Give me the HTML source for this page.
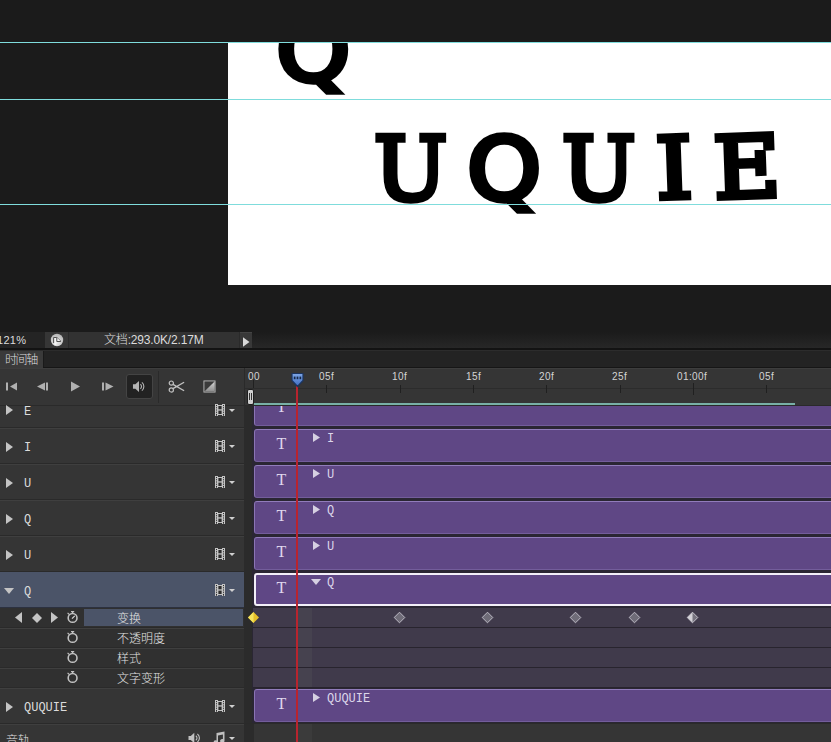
<!DOCTYPE html>
<html lang="zh-CN">
<head>
<meta charset="utf-8">
<title>时间轴</title>
<style>
html,body{margin:0;padding:0;}
body{width:831px;height:742px;overflow:hidden;background:#1b1b1b;position:relative;
 font-family:"Liberation Sans","Noto Sans CJK SC",sans-serif;font-size:11px;color:#d6d6d6;}
.abs,.abs *{position:absolute;}
#stage{position:absolute;left:0;top:0;width:831px;height:742px;overflow:hidden;}
#stage div,#stage span,#stage svg{position:absolute;}
/* canvas */
#canvas{left:228px;top:42px;width:603px;height:243px;background:#fff;overflow:hidden;}
.big{color:#000;font-size:96px;line-height:96px;font-weight:normal;-webkit-text-stroke:6px #000;
 transform-origin:0 0;white-space:nowrap;}
.big.sl{font-family:"DejaVu Serif","Liberation Serif",serif;}
.big.qs{font-family:"DejaVu Sans","Liberation Sans",sans-serif;}
.guide{left:0;width:831px;height:1px;background:#7fdcdc;}
/* status bar */
.sb{top:332px;height:16px;}
.txt{white-space:nowrap;}
/* rows */
.row{left:0;width:244px;background:#353535;}
.sep-d{left:0;width:244px;height:1px;background:#2a2a2a;}
.sep-l{left:0;width:244px;height:1px;background:#3f3f3f;}
.lname{left:24px;font-family:"Liberation Mono","DejaVu Sans Mono",monospace;font-size:12px;line-height:12px;color:#dcdcdc;white-space:nowrap;}
.cn{font-family:"Liberation Sans","Noto Sans CJK SC",sans-serif;font-size:12px;line-height:14px;color:#e2e2e2;white-space:nowrap;font-weight:300;}
.clip{left:254px;width:590px;height:33px;background:#5f4785;border:1px solid #8a74b4;border-top-color:#917cbb;border-bottom-color:#735d9b;border-radius:3px;box-sizing:border-box;}
.clip.sel{border:2px solid #f2eef8;}
.tico{font-family:"Liberation Serif","DejaVu Serif",serif;font-weight:normal;font-size:16px;line-height:16px;color:#e0d8ee;left:20.3px;top:6.3px;width:12px;text-align:center;}
.cname{left:72px;top:2.5px;font-family:"Liberation Mono","DejaVu Sans Mono",monospace;font-size:12px;line-height:12px;color:#dcd6ea;white-space:nowrap;}
.carr{left:58px;top:3px;}
.ruler-t{top:370.5px;font-size:10px;line-height:12px;color:#d4d4d4;white-space:nowrap;letter-spacing:0.4px;}
.tick{width:1px;background:#202020;top:385px;height:8px;}
</style>
</head>
<body>
<div id="stage">

<!-- ===== document canvas ===== -->
<div id="canvas">
  <span class="big qs" id="bq" style="left:48px;top:-33.9px;transform:scale(0.986,0.905);">Q</span>
  <span class="big sl" id="l1" style="left:145.5px;top:83.9px;transform:scale(0.906,0.910);">U</span>
  <span class="big qs" id="l2" style="left:238.6px;top:84.9px;transform:scale(0.983,0.901);">Q</span>
  <span class="big sl" id="l3" style="left:333.7px;top:83.9px;transform:scale(0.910,0.910);">U</span>
  <span class="big sl" id="l4" style="left:427.45px;top:79.25px;transform-origin:19px 46px;transform:rotate(-2deg) scale(0.97,0.89);">I</span>
  <span class="big sl" id="l5" style="left:483.95px;top:78.25px;transform-origin:33.5px 46px;transform:rotate(-2deg) scale(0.955,0.895);">E</span>
</div>
<div class="guide" style="top:42px;"></div>
<div class="guide" style="top:99px;"></div>
<div class="guide" style="top:204px;"></div>

<!-- ===== status bar ===== -->
<div id="statusbar">
  <div class="sb" style="left:252px;width:579px;background:linear-gradient(#1b1b1b,#272727);"></div>
  <div class="sb" style="left:0;width:45px;background:#242424;"></div>
  <div class="sb" style="left:45px;width:24px;background:#363636;"></div>
  <div class="sb" style="left:69px;width:171px;background:#323232;"></div>
  <div class="sb" style="left:68px;width:1px;background:#2a2a2a;"></div>
  <div class="sb" style="left:240px;width:12px;background:#383838;border-top:1px solid #444;box-sizing:border-box;"></div>
  <div class="sb" style="left:239px;width:1px;background:#2a2a2a;"></div>
  <span class="txt" style="left:-3px;top:332.5px;font-size:11px;line-height:14px;color:#dcdcdc;letter-spacing:0.3px;">121%</span>
  <svg style="left:50px;top:333px;" width="14" height="14" viewBox="0 0 14 14">
    <defs><radialGradient id="cg" cx="0.45" cy="0.7" r="0.7"><stop offset="0" stop-color="#ececec"/><stop offset="1" stop-color="#b4b4b4"/></radialGradient></defs>
    <circle cx="7" cy="7" r="6.2" fill="url(#cg)"/>
    <path d="M4.3 5h2v7.2h-2z" fill="#f4f4f4"/>
    <path d="M3.6 10V4.5h3.2L11 8.4" fill="none" stroke="#505050" stroke-width="1"/>
    <path d="M6.8 4.5v4h4" fill="#f0f0f0" stroke="#505050" stroke-width="1"/>
  </svg>
  <span class="txt" id="docinfo" style="left:104px;top:333px;font-size:12px;line-height:14px;color:#dcdcdc;letter-spacing:-0.17px;font-weight:300;">文档:293.0K/2.17M</span>
  <svg style="left:242px;top:335.5px;" width="8" height="12" viewBox="0 0 8 12"><path d="M1 1.2l6.5 4.8L1 10.8z" fill="#d8d8d8"/></svg>
</div>

<!-- ===== tab bar ===== -->
<div style="left:0;top:348px;width:831px;height:2px;background:#131313;"></div>
<div style="left:0;top:350px;width:831px;height:1px;background:#2c2c2c;"></div>
<div style="left:0;top:351px;width:831px;height:16px;background:#232323;"></div>
<div style="left:0;top:367px;width:831px;height:1px;background:#161616;"></div>
<div style="left:0;top:351px;width:43px;height:17px;background:#3a3a3a;"></div>
<div style="left:43px;top:351px;width:1px;height:16px;background:#1a1a1a;"></div>
<span class="txt" style="left:5px;top:353px;font-size:12px;line-height:14px;color:#dcdcdc;letter-spacing:-1.4px;font-weight:300;">时间轴</span>

<!-- ===== timeline panel ===== -->
<div id="panel" style="left:0;top:368px;width:831px;height:374px;background:#353535;"></div>
<div style="left:0;top:368px;width:831px;height:1px;background:#3d3d3d;"></div>

<!-- controls -->
<div id="controls">
  <svg style="left:5px;top:381px;" width="14" height="11" viewBox="0 0 14 11"><rect x="1" y="1.5" width="2" height="8" fill="#b0b0b0"/><path d="M12 1.5v8L5 5.5z" fill="#b0b0b0"/></svg>
  <svg style="left:36px;top:381px;" width="14" height="11" viewBox="0 0 14 11"><path d="M9 1.5v8L1 5.5z" fill="#b0b0b0"/><rect x="10" y="1.5" width="2" height="8" fill="#b0b0b0"/></svg>
  <svg style="left:70px;top:380px;" width="12" height="13" viewBox="0 0 12 13"><path d="M1 1.5v10L10 6.5z" fill="#b0b0b0"/></svg>
  <svg style="left:101px;top:381px;" width="14" height="11" viewBox="0 0 14 11"><rect x="1" y="1.5" width="2" height="8" fill="#b0b0b0"/><path d="M4.5 1.5v8l8-4z" fill="#b0b0b0"/></svg>
  <div style="left:126px;top:374px;width:27px;height:25px;background:#222;border:1px solid #444;border-radius:3px;box-sizing:border-box;"></div>
  <svg style="left:132px;top:379.5px;" width="14" height="13" viewBox="0 0 15 14">
    <path d="M1 4.7h2.6L7.5 1v12L3.6 9.3H1z" fill="#b4b4b4"/>
    <path d="M9 4.6a3 3 0 0 1 0 4.8" fill="none" stroke="#b4b4b4" stroke-width="1.2"/>
    <path d="M10.6 2.6a5.6 5.6 0 0 1 0 8.8" fill="none" stroke="#b4b4b4" stroke-width="1.2"/>
  </svg>
  <div style="left:158px;top:371px;width:1px;height:32px;background:#2a2a2a;"></div>
  <!-- scissors -->
  <svg style="left:168px;top:379.5px;" width="17.5" height="13" viewBox="0 0 19 14">
    <circle cx="3.6" cy="3.3" r="2.3" fill="none" stroke="#c0c0c0" stroke-width="1.3"/>
    <circle cx="3.6" cy="10.7" r="2.3" fill="none" stroke="#c0c0c0" stroke-width="1.3"/>
    <path d="M5.4 4.6L17.5 11.6M5.4 9.4L17.5 2.4" stroke="#c0c0c0" stroke-width="1.5" fill="none"/>
  </svg>
  <!-- transition -->
  <svg style="left:202.5px;top:379.5px;" width="13" height="13" viewBox="0 0 14 14">
    <defs><linearGradient id="tg" x1="0" y1="0" x2="0" y2="1"><stop offset="0" stop-color="#d8d8d8"/><stop offset="1" stop-color="#8c8c8c"/></linearGradient></defs>
    <rect x="1" y="1" width="12" height="12" fill="#3a3a3a" stroke="#b8b8b8" stroke-width="1"/>
    <path d="M12.5 1.5v11h-11z" fill="url(#tg)"/>
  </svg>
</div>

<!-- ruler -->
<div id="ruler">
  <div style="left:244px;top:368px;width:1px;height:38px;background:#2a2a2a;"></div>
  <div style="left:245px;top:388px;width:586px;height:1px;background:#2c2c2c;"></div>
  <span class="ruler-t" style="left:248px;">00</span>
  <span class="ruler-t" style="left:319px;">05f</span>
  <span class="ruler-t" style="left:392px;">10f</span>
  <span class="ruler-t" style="left:466px;">15f</span>
  <span class="ruler-t" style="left:539px;">20f</span>
  <span class="ruler-t" style="left:612px;">25f</span>
  <span class="ruler-t" style="left:677px;">01:00f</span>
  <span class="ruler-t" style="left:759px;">05f</span>
  <div class="tick" style="left:253px;top:380px;height:8px;"></div>
  <div class="tick" style="left:326px;"></div>
  <div class="tick" style="left:400px;"></div>
  <div class="tick" style="left:473px;"></div>
  <div class="tick" style="left:546px;"></div>
  <div class="tick" style="left:620px;"></div>
  <div class="tick" style="left:693px;top:383px;height:12px;"></div>
  <div class="tick" style="left:766px;"></div>
  <!-- work area bar -->
  <div style="left:254px;top:403px;width:541px;height:2px;background:#78b0a6;"></div>
</div>

<!-- ===== layer list (left) ===== -->
<div id="layers">
  <div class="sep-d" style="top:405px;width:831px;"></div>

  <!-- selected row -->
  <div style="left:0;top:572px;width:244px;height:35px;background:#4b5468;"></div>
  <!-- property rows bg -->
  <div style="left:0;top:608px;width:244px;height:80px;background:#303030;"></div>
  <div style="left:84px;top:609px;width:159px;height:17px;background:#4b5468;"></div>

  <!-- separators -->
  <div class="sep-d" style="top:427px;"></div><div class="sep-l" style="top:428px;"></div>
  <div class="sep-d" style="top:463px;"></div><div class="sep-l" style="top:464px;"></div>
  <div class="sep-d" style="top:499px;"></div><div class="sep-l" style="top:500px;"></div>
  <div class="sep-d" style="top:535px;"></div><div class="sep-l" style="top:536px;"></div>
  <div class="sep-d" style="top:571px;"></div>
  <div class="sep-d" style="top:607px;background:#2c3140;"></div>
  <div class="sep-d" style="top:627px;"></div><div class="sep-l" style="top:628px;"></div>
  <div class="sep-d" style="top:647px;"></div><div class="sep-l" style="top:648px;"></div>
  <div class="sep-d" style="top:667px;"></div><div class="sep-l" style="top:668px;"></div>
  <div class="sep-d" style="top:687px;"></div><div class="sep-l" style="top:688px;"></div>
  <div class="sep-d" style="top:723px;"></div><div class="sep-l" style="top:724px;"></div>

  <!-- names -->
  <span class="lname" style="top:406px;">E</span>
  <span class="lname" style="top:442px;">I</span>
  <span class="lname" style="top:478px;">U</span>
  <span class="lname" style="top:514px;">Q</span>
  <span class="lname" style="top:550px;">U</span>
  <span class="lname" style="top:586px;">Q</span>
  <span class="lname" style="top:702px;">QUQUIE</span>

  <span class="cn" style="left:117px;top:612px;">变换</span>
  <span class="cn" style="left:117px;top:632px;">不透明度</span>
  <span class="cn" style="left:117px;top:652px;">样式</span>
  <span class="cn" style="left:117px;top:672px;">文字变形</span>
  <span class="cn" style="left:6px;top:733.5px;">音轨</span>
  <svg style="left:6px;top:405px;" width="7" height="10" viewBox="0 0 7 10"><path d="M0 0v10L7 5.0z" fill="#c4c4c4"/></svg>
  <svg style="left:6px;top:441.5px;" width="7" height="10" viewBox="0 0 7 10"><path d="M0 0v10L7 5.0z" fill="#c4c4c4"/></svg>
  <svg style="left:6px;top:477.5px;" width="7" height="10" viewBox="0 0 7 10"><path d="M0 0v10L7 5.0z" fill="#c4c4c4"/></svg>
  <svg style="left:6px;top:513.5px;" width="7" height="10" viewBox="0 0 7 10"><path d="M0 0v10L7 5.0z" fill="#c4c4c4"/></svg>
  <svg style="left:6px;top:549.5px;" width="7" height="10" viewBox="0 0 7 10"><path d="M0 0v10L7 5.0z" fill="#c4c4c4"/></svg>
  <svg style="left:4px;top:588px;" width="10" height="6" viewBox="0 0 10 6"><path d="M0 0h10L5.0 6z" fill="#c4c4c4"/></svg>
  <svg style="left:6px;top:701.5px;" width="7" height="10" viewBox="0 0 7 10"><path d="M0 0v10L7 5.0z" fill="#c4c4c4"/></svg>
  <svg style="left:215px;top:404px;" width="10" height="12" viewBox="0 0 10 12"><rect x="0" y="0" width="3" height="12" fill="#c4c4c4"/><rect x="7" y="0" width="3" height="12" fill="#c4c4c4"/><rect x="3" y="1" width="4" height="10" fill="#c4c4c4"/><rect x="3.4" y="2" width="3.2" height="3.3" fill="#2b2b2b"/><rect x="3.4" y="6.6" width="3.2" height="3.4" fill="#2b2b2b"/><g fill="#2b2b2b"><rect x="1" y="1" width="1" height="1.1"/><rect x="8" y="1" width="1" height="1.1"/><rect x="1" y="3.2" width="1" height="1.1"/><rect x="8" y="3.2" width="1" height="1.1"/><rect x="1" y="5.45" width="1" height="1.1"/><rect x="8" y="5.45" width="1" height="1.1"/><rect x="1" y="7.7" width="1" height="1.1"/><rect x="8" y="7.7" width="1" height="1.1"/><rect x="1" y="9.9" width="1" height="1.1"/><rect x="8" y="9.9" width="1" height="1.1"/></g><rect x="1" y="11.3" width="1" height="0.7" fill="#353535"/><rect x="8" y="11.3" width="1" height="0.7" fill="#353535"/></svg><svg style="left:229px;top:409px;" width="6" height="3" viewBox="0 0 6 3"><path d="M0 0h6L3 3z" fill="#d0d0d0"/></svg>
  <svg style="left:215px;top:440px;" width="10" height="12" viewBox="0 0 10 12"><rect x="0" y="0" width="3" height="12" fill="#c4c4c4"/><rect x="7" y="0" width="3" height="12" fill="#c4c4c4"/><rect x="3" y="1" width="4" height="10" fill="#c4c4c4"/><rect x="3.4" y="2" width="3.2" height="3.3" fill="#2b2b2b"/><rect x="3.4" y="6.6" width="3.2" height="3.4" fill="#2b2b2b"/><g fill="#2b2b2b"><rect x="1" y="1" width="1" height="1.1"/><rect x="8" y="1" width="1" height="1.1"/><rect x="1" y="3.2" width="1" height="1.1"/><rect x="8" y="3.2" width="1" height="1.1"/><rect x="1" y="5.45" width="1" height="1.1"/><rect x="8" y="5.45" width="1" height="1.1"/><rect x="1" y="7.7" width="1" height="1.1"/><rect x="8" y="7.7" width="1" height="1.1"/><rect x="1" y="9.9" width="1" height="1.1"/><rect x="8" y="9.9" width="1" height="1.1"/></g><rect x="1" y="11.3" width="1" height="0.7" fill="#353535"/><rect x="8" y="11.3" width="1" height="0.7" fill="#353535"/></svg><svg style="left:229px;top:445px;" width="6" height="3" viewBox="0 0 6 3"><path d="M0 0h6L3 3z" fill="#d0d0d0"/></svg>
  <svg style="left:215px;top:476px;" width="10" height="12" viewBox="0 0 10 12"><rect x="0" y="0" width="3" height="12" fill="#c4c4c4"/><rect x="7" y="0" width="3" height="12" fill="#c4c4c4"/><rect x="3" y="1" width="4" height="10" fill="#c4c4c4"/><rect x="3.4" y="2" width="3.2" height="3.3" fill="#2b2b2b"/><rect x="3.4" y="6.6" width="3.2" height="3.4" fill="#2b2b2b"/><g fill="#2b2b2b"><rect x="1" y="1" width="1" height="1.1"/><rect x="8" y="1" width="1" height="1.1"/><rect x="1" y="3.2" width="1" height="1.1"/><rect x="8" y="3.2" width="1" height="1.1"/><rect x="1" y="5.45" width="1" height="1.1"/><rect x="8" y="5.45" width="1" height="1.1"/><rect x="1" y="7.7" width="1" height="1.1"/><rect x="8" y="7.7" width="1" height="1.1"/><rect x="1" y="9.9" width="1" height="1.1"/><rect x="8" y="9.9" width="1" height="1.1"/></g><rect x="1" y="11.3" width="1" height="0.7" fill="#353535"/><rect x="8" y="11.3" width="1" height="0.7" fill="#353535"/></svg><svg style="left:229px;top:481px;" width="6" height="3" viewBox="0 0 6 3"><path d="M0 0h6L3 3z" fill="#d0d0d0"/></svg>
  <svg style="left:215px;top:512px;" width="10" height="12" viewBox="0 0 10 12"><rect x="0" y="0" width="3" height="12" fill="#c4c4c4"/><rect x="7" y="0" width="3" height="12" fill="#c4c4c4"/><rect x="3" y="1" width="4" height="10" fill="#c4c4c4"/><rect x="3.4" y="2" width="3.2" height="3.3" fill="#2b2b2b"/><rect x="3.4" y="6.6" width="3.2" height="3.4" fill="#2b2b2b"/><g fill="#2b2b2b"><rect x="1" y="1" width="1" height="1.1"/><rect x="8" y="1" width="1" height="1.1"/><rect x="1" y="3.2" width="1" height="1.1"/><rect x="8" y="3.2" width="1" height="1.1"/><rect x="1" y="5.45" width="1" height="1.1"/><rect x="8" y="5.45" width="1" height="1.1"/><rect x="1" y="7.7" width="1" height="1.1"/><rect x="8" y="7.7" width="1" height="1.1"/><rect x="1" y="9.9" width="1" height="1.1"/><rect x="8" y="9.9" width="1" height="1.1"/></g><rect x="1" y="11.3" width="1" height="0.7" fill="#353535"/><rect x="8" y="11.3" width="1" height="0.7" fill="#353535"/></svg><svg style="left:229px;top:517px;" width="6" height="3" viewBox="0 0 6 3"><path d="M0 0h6L3 3z" fill="#d0d0d0"/></svg>
  <svg style="left:215px;top:548px;" width="10" height="12" viewBox="0 0 10 12"><rect x="0" y="0" width="3" height="12" fill="#c4c4c4"/><rect x="7" y="0" width="3" height="12" fill="#c4c4c4"/><rect x="3" y="1" width="4" height="10" fill="#c4c4c4"/><rect x="3.4" y="2" width="3.2" height="3.3" fill="#2b2b2b"/><rect x="3.4" y="6.6" width="3.2" height="3.4" fill="#2b2b2b"/><g fill="#2b2b2b"><rect x="1" y="1" width="1" height="1.1"/><rect x="8" y="1" width="1" height="1.1"/><rect x="1" y="3.2" width="1" height="1.1"/><rect x="8" y="3.2" width="1" height="1.1"/><rect x="1" y="5.45" width="1" height="1.1"/><rect x="8" y="5.45" width="1" height="1.1"/><rect x="1" y="7.7" width="1" height="1.1"/><rect x="8" y="7.7" width="1" height="1.1"/><rect x="1" y="9.9" width="1" height="1.1"/><rect x="8" y="9.9" width="1" height="1.1"/></g><rect x="1" y="11.3" width="1" height="0.7" fill="#353535"/><rect x="8" y="11.3" width="1" height="0.7" fill="#353535"/></svg><svg style="left:229px;top:553px;" width="6" height="3" viewBox="0 0 6 3"><path d="M0 0h6L3 3z" fill="#d0d0d0"/></svg>
  <svg style="left:215px;top:584px;" width="10" height="12" viewBox="0 0 10 12"><rect x="0" y="0" width="3" height="12" fill="#c4c4c4"/><rect x="7" y="0" width="3" height="12" fill="#c4c4c4"/><rect x="3" y="1" width="4" height="10" fill="#c4c4c4"/><rect x="3.4" y="2" width="3.2" height="3.3" fill="#2b2b2b"/><rect x="3.4" y="6.6" width="3.2" height="3.4" fill="#2b2b2b"/><g fill="#2b2b2b"><rect x="1" y="1" width="1" height="1.1"/><rect x="8" y="1" width="1" height="1.1"/><rect x="1" y="3.2" width="1" height="1.1"/><rect x="8" y="3.2" width="1" height="1.1"/><rect x="1" y="5.45" width="1" height="1.1"/><rect x="8" y="5.45" width="1" height="1.1"/><rect x="1" y="7.7" width="1" height="1.1"/><rect x="8" y="7.7" width="1" height="1.1"/><rect x="1" y="9.9" width="1" height="1.1"/><rect x="8" y="9.9" width="1" height="1.1"/></g><rect x="1" y="11.3" width="1" height="0.7" fill="#353535"/><rect x="8" y="11.3" width="1" height="0.7" fill="#353535"/></svg><svg style="left:229px;top:589px;" width="6" height="3" viewBox="0 0 6 3"><path d="M0 0h6L3 3z" fill="#d0d0d0"/></svg>
  <svg style="left:215px;top:700px;" width="10" height="12" viewBox="0 0 10 12"><rect x="0" y="0" width="3" height="12" fill="#c4c4c4"/><rect x="7" y="0" width="3" height="12" fill="#c4c4c4"/><rect x="3" y="1" width="4" height="10" fill="#c4c4c4"/><rect x="3.4" y="2" width="3.2" height="3.3" fill="#2b2b2b"/><rect x="3.4" y="6.6" width="3.2" height="3.4" fill="#2b2b2b"/><g fill="#2b2b2b"><rect x="1" y="1" width="1" height="1.1"/><rect x="8" y="1" width="1" height="1.1"/><rect x="1" y="3.2" width="1" height="1.1"/><rect x="8" y="3.2" width="1" height="1.1"/><rect x="1" y="5.45" width="1" height="1.1"/><rect x="8" y="5.45" width="1" height="1.1"/><rect x="1" y="7.7" width="1" height="1.1"/><rect x="8" y="7.7" width="1" height="1.1"/><rect x="1" y="9.9" width="1" height="1.1"/><rect x="8" y="9.9" width="1" height="1.1"/></g><rect x="1" y="11.3" width="1" height="0.7" fill="#353535"/><rect x="8" y="11.3" width="1" height="0.7" fill="#353535"/></svg><svg style="left:229px;top:705px;" width="6" height="3" viewBox="0 0 6 3"><path d="M0 0h6L3 3z" fill="#d0d0d0"/></svg>
  <svg style="left:15px;top:612px;" width="7" height="11" viewBox="0 0 7 11"><path d="M7 0v11L0 5.5z" fill="#c4c4c4"/></svg>
  <svg style="left:31.5px;top:612.5px;" width="10" height="10" viewBox="0 0 10 10"><path d="M5 0L10 5 5 10 0 5z" fill="#c4c4c4"/></svg>
  <svg style="left:50.5px;top:612px;" width="7" height="11" viewBox="0 0 7 11"><path d="M0 0v11L7 5.5z" fill="#c4c4c4"/></svg>
  <svg style="left:66.5px;top:611px;" width="11" height="13" viewBox="0 0 11 13"><circle cx="5.6" cy="6.9" r="4.4" fill="none" stroke="#c2c2c2" stroke-width="1.6"/><path d="M4 0.6h3.2M5.6 0.6v2" stroke="#c2c2c2" stroke-width="1.2"/><path d="M0.6 1.8l1.5 1.5" stroke="#c2c2c2" stroke-width="1.2"/><path d="M5 7.6L7.8 4.8" stroke="#d8d8d8" stroke-width="1.2"/></svg>
  <svg style="left:66.5px;top:631px;" width="11" height="13" viewBox="0 0 11 13"><circle cx="5.6" cy="6.9" r="4.4" fill="none" stroke="#c2c2c2" stroke-width="1.6"/><path d="M4 0.6h3.2M5.6 0.6v2" stroke="#c2c2c2" stroke-width="1.2"/><path d="M0.6 1.8l1.5 1.5" stroke="#c2c2c2" stroke-width="1.2"/></svg>
  <svg style="left:66.5px;top:651px;" width="11" height="13" viewBox="0 0 11 13"><circle cx="5.6" cy="6.9" r="4.4" fill="none" stroke="#c2c2c2" stroke-width="1.6"/><path d="M4 0.6h3.2M5.6 0.6v2" stroke="#c2c2c2" stroke-width="1.2"/><path d="M0.6 1.8l1.5 1.5" stroke="#c2c2c2" stroke-width="1.2"/></svg>
  <svg style="left:66.5px;top:671px;" width="11" height="13" viewBox="0 0 11 13"><circle cx="5.6" cy="6.9" r="4.4" fill="none" stroke="#c2c2c2" stroke-width="1.6"/><path d="M4 0.6h3.2M5.6 0.6v2" stroke="#c2c2c2" stroke-width="1.2"/><path d="M0.6 1.8l1.5 1.5" stroke="#c2c2c2" stroke-width="1.2"/></svg>
  <svg style="left:188px;top:732px;" width="13" height="12" viewBox="0 0 13 12"><path d="M0.5 4h2.3L6.3 0.8v10.4L2.8 8H0.5z" fill="#c0c0c0"/><path d="M7.8 3.8a2.6 2.6 0 0 1 0 4.4M9.4 2a5 5 0 0 1 0 8" fill="none" stroke="#c0c0c0" stroke-width="1.1"/></svg>
  <svg style="left:212px;top:731px;" width="13" height="13" viewBox="0 0 13 13"><path d="M4.5 2l8-1.5v9.2a2.2 1.8 0 1 1-1.6-1.7V3.6L6 4.6v6.6a2.2 1.8 0 1 1-1.5-1.7z" fill="#c0c0c0"/></svg>
  <svg style="left:229px;top:737px;" width="6" height="3" viewBox="0 0 6 3"><path d="M0 0h6L3 3z" fill="#d0d0d0"/></svg>
</div>

<!-- ===== track area (right) ===== -->
<div id="tracks">
  <div style="left:244px;top:406px;width:10px;height:336px;background:#2b2b2b;"></div>
  <div style="left:252px;top:406px;width:579px;height:318px;background:#2a2633;"></div>
  <!-- keyframe rows -->
  <div style="left:253px;top:608px;width:578px;height:80px;background:#403a4b;"></div>
  <div style="left:298px;top:608px;width:14px;height:80px;background:#46424f;"></div>
  <div style="left:253px;top:627px;width:578px;height:1px;background:#28242e;"></div>
  <div style="left:253px;top:647px;width:578px;height:1px;background:#28242e;"></div>
  <div style="left:253px;top:667px;width:578px;height:1px;background:#28242e;"></div>
  <div style="left:253px;top:687px;width:578px;height:1px;background:#28242e;"></div>

  <div style="left:298px;top:724px;width:14px;height:18px;background:#3b3b3b;"></div>
  <div style="left:244px;top:723px;width:587px;height:1px;background:#2a2a2a;"></div>
  <!-- clips -->
  <div class="clip" style="top:406px;height:20px;border-top:none;border-radius:0 0 3px 3px;overflow:hidden;"><span class="tico" style="top:-7px;">T</span></div>
  <div class="clip" style="top:429px;"><span class="tico">T</span><svg class="carr" width="7" height="9" viewBox="0 0 7 9"><path d="M0 0v9L7 4.5z" fill="#d6d0e2"/></svg><span class="cname">I</span></div>
  <div class="clip" style="top:465px;"><span class="tico">T</span><svg class="carr" width="7" height="9" viewBox="0 0 7 9"><path d="M0 0v9L7 4.5z" fill="#d6d0e2"/></svg><span class="cname">U</span></div>
  <div class="clip" style="top:501px;"><span class="tico">T</span><svg class="carr" width="7" height="9" viewBox="0 0 7 9"><path d="M0 0v9L7 4.5z" fill="#d6d0e2"/></svg><span class="cname">Q</span></div>
  <div class="clip" style="top:537px;"><span class="tico">T</span><svg class="carr" width="7" height="9" viewBox="0 0 7 9"><path d="M0 0v9L7 4.5z" fill="#d6d0e2"/></svg><span class="cname">U</span></div>
  <div class="clip sel" style="top:573px;"><span class="tico" style="left:19.3px;top:5.3px;">T</span><svg style="left:54.5px;top:4px;" width="10" height="6" viewBox="0 0 10 6"><path d="M0 0h10L5 6z" fill="#d6d0e2"/></svg><span class="cname" style="left:71px;top:1.5px;">Q</span></div>
  <div class="clip" style="top:689px;"><span class="tico">T</span><svg class="carr" width="7" height="9" viewBox="0 0 7 9"><path d="M0 0v9L7 4.5z" fill="#d6d0e2"/></svg><span class="cname">QUQUIE</span></div>
</div>

<!-- keyframes -->
<div id="keys">
  <svg style="left:247.0px;top:611.0px;" width="13" height="13" viewBox="0 0 13 13"><path d="M6.5 1L12 6.5 6.5 12 1 6.5z" fill="#e6c02a"/><path d="M6.5 1L6.5 12 1 6.5z" fill="#f6e45c"/></svg>
  <svg style="left:393.0px;top:611.0px;" width="13" height="13" viewBox="0 0 13 13"><path d="M6.5 1.2L11.8 6.5 6.5 11.8 1.2 6.5z" fill="#6f6c78" stroke="#bdbac6" stroke-width="1"/></svg>
  <svg style="left:481.0px;top:611.0px;" width="13" height="13" viewBox="0 0 13 13"><path d="M6.5 1.2L11.8 6.5 6.5 11.8 1.2 6.5z" fill="#6f6c78" stroke="#bdbac6" stroke-width="1"/></svg>
  <svg style="left:569.0px;top:611.0px;" width="13" height="13" viewBox="0 0 13 13"><path d="M6.5 1.2L11.8 6.5 6.5 11.8 1.2 6.5z" fill="#6f6c78" stroke="#bdbac6" stroke-width="1"/></svg>
  <svg style="left:628.0px;top:611.0px;" width="13" height="13" viewBox="0 0 13 13"><path d="M6.5 1.2L11.8 6.5 6.5 11.8 1.2 6.5z" fill="#6f6c78" stroke="#bdbac6" stroke-width="1"/></svg>
  <svg style="left:686.0px;top:611.0px;" width="13" height="13" viewBox="0 0 13 13"><path d="M6.5 1.2L11.8 6.5 6.5 11.8 1.2 6.5z" fill="#77747f" stroke="#c6c3cd" stroke-width="1"/><path d="M6.5 1.4L6.5 11.6 1.4 6.5z" fill="#d2d0d6"/></svg>
</div>

<!-- playhead -->
<div style="left:296px;top:386px;width:2px;height:356px;background:#b8242e;"></div>
<svg style="left:290px;top:372px;" width="15" height="16" viewBox="0 0 15 16">
  <defs><linearGradient id="pg" x1="0" y1="0" x2="0" y2="1"><stop offset="0" stop-color="#7ea6e6"/><stop offset="1" stop-color="#3d6cc0"/></linearGradient></defs><path d="M2 1.5h11v7l-5.5 6L2 8.5z" fill="url(#pg)" stroke="#1c3560" stroke-width="1.2" stroke-linejoin="round"/>
  <rect x="3.8" y="4.6" width="1.7" height="2.6" fill="#16294a"/><rect x="6.65" y="4.6" width="1.7" height="2.6" fill="#16294a"/><rect x="9.5" y="4.6" width="1.7" height="2.6" fill="#16294a"/>
</svg>
<!-- zoom slider handle -->
<div style="left:247px;top:389px;width:7px;height:16px;background:#cfcfcf;border:1px solid #1e1e1e;border-radius:2px;box-sizing:border-box;"></div>
<div style="left:249px;top:393px;width:1px;height:7px;background:#333;"></div>
<div style="left:251px;top:393px;width:1px;height:7px;background:#333;"></div>

</div>
</body>
</html>
